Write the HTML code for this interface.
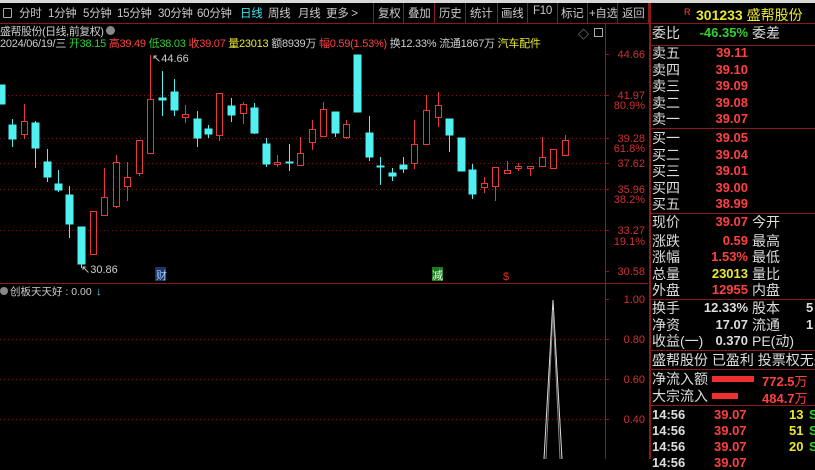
<!DOCTYPE html>
<html><head><meta charset="utf-8">
<style>
*{margin:0;padding:0;box-sizing:border-box}
body{width:815px;height:459px;background:#000;overflow:hidden;position:relative;font-family:"Liberation Sans","Noto Sans CJK SC",sans-serif;color:#ccc}
.tb{position:absolute;left:0;top:0;width:815px;height:24px;background:#000;border-top:3px solid #d8d8d8;border-bottom:1px solid #8a1a1a}
.tb span{position:absolute;top:2px;font-size:11.5px;color:#c8c8c8;white-space:nowrap;letter-spacing:-0.3px}
.sep{position:absolute;top:3px;width:1px;height:21px;background:#8a1a1a}
.t{position:absolute;white-space:nowrap}
.rp{position:absolute;left:649px;top:3px;width:166px;height:456px;border-left:2px solid #8a1a1a}
.hl{position:absolute;left:649px;width:166px;height:1px;background:#8a1a1a}
.lb{position:absolute;left:652px;font-size:14px;color:#ddd;white-space:nowrap;line-height:16px}
.v{position:absolute;width:96px;left:652px;text-align:right;font-size:13px;font-weight:bold;line-height:16px;white-space:nowrap}
.lb2{position:absolute;left:752px;font-size:14px;color:#ddd;white-space:nowrap;line-height:16px}
.r{color:#ff4040}.g{color:#30d030}.y{color:#e8e830}.w{color:#ddd}
</style></head><body>
<div class="tb">
 <div style="position:absolute;left:3px;top:5px;width:9px;height:10px;border:1px solid #aaa;border-radius:1px"></div>
 <span style="left:19px">分时</span><span style="left:48px">1分钟</span><span style="left:83px">5分钟</span><span style="left:117px">15分钟</span><span style="left:158px">30分钟</span><span style="left:197px">60分钟</span><span style="left:240px;color:#40e0f0">日线</span><span style="left:268px">周线</span><span style="left:298px">月线</span><span style="left:326px">更多 &gt;</span>
 <div class="sep" style="left:373px;top:0"></div><span style="left:378px">复权</span>
 <div class="sep" style="left:403px;top:0"></div><span style="left:408px">叠加</span>
 <div class="sep" style="left:434px;top:0"></div><span style="left:439px">历史</span>
 <div class="sep" style="left:465px;top:0"></div><span style="left:470px">统计</span>
 <div class="sep" style="left:497px;top:0"></div><span style="left:501px">画线</span>
 <div class="sep" style="left:527px;top:0"></div><span style="left:533px">F10</span>
 <div class="sep" style="left:557px;top:0"></div><span style="left:561px">标记</span>
 <div class="sep" style="left:587px;top:0"></div><span style="left:589px">+自选</span>
 <div class="sep" style="left:617px;top:0"></div><span style="left:622px">返回</span>
 <div class="sep" style="left:648px;top:0"></div>
</div>
<div class="t" style="left:0;top:23px;font-size:11px;letter-spacing:-0.5px;color:#ccc">盛帮股份(日线,前复权) <span style="display:inline-block;width:9px;height:9px;border-radius:50%;background:#888"></span></div>
<div class="t" style="left:0;top:35px;font-size:11px;letter-spacing:-0.25px;color:#ccc">2024/06/19/三 <span class="g">开38.15</span> <span class="r">高39.49</span> <span class="g">低38.03</span> <span class="r">收39.07</span> <span class="y">量23013</span> 额8939万 <span class="r">幅0.59(1.53%)</span> 换12.33% 流通1867万 <span class="y">汽车配件</span></div>
<div class="t" style="left:578px;top:26px;font-size:11px;color:#aaa">◇</div>
<div style="position:absolute;left:594px;top:28px;width:9px;height:9px;border:1px solid #aaa"></div>
<svg width="815" height="459" style="position:absolute;left:0;top:0" xmlns="http://www.w3.org/2000/svg">
<g stroke="#7a1414" stroke-dasharray="1,3" stroke-width="1">
<line x1="0" y1="95.5" x2="605" y2="95.5"/><line x1="0" y1="138.5" x2="605" y2="138.5"/><line x1="0" y1="163.5" x2="605" y2="163.5"/><line x1="0" y1="189.5" x2="605" y2="189.5"/><line x1="0" y1="230.5" x2="605" y2="230.5"/>
<line x1="0" y1="339.5" x2="605" y2="339.5"/><line x1="0" y1="379.5" x2="605" y2="379.5"/><line x1="0" y1="419.5" x2="605" y2="419.5"/>
</g>
<line x1="605.5" y1="24" x2="605.5" y2="459" stroke="#8a1a1a"/>
<line x1="0" y1="283.5" x2="648" y2="283.5" stroke="#8a1a1a"/>
<g stroke="#8a1a1a"><line x1="605" y1="54.5" x2="609" y2="54.5"/><line x1="605" y1="95.5" x2="609" y2="95.5"/><line x1="605" y1="138.5" x2="609" y2="138.5"/><line x1="605" y1="163.5" x2="609" y2="163.5"/><line x1="605" y1="189.5" x2="609" y2="189.5"/><line x1="605" y1="230.5" x2="609" y2="230.5"/><line x1="605" y1="271.5" x2="609" y2="271.5"/><line x1="605" y1="299.5" x2="609" y2="299.5"/><line x1="605" y1="339.5" x2="609" y2="339.5"/><line x1="605" y1="379.5" x2="609" y2="379.5"/><line x1="605" y1="419.5" x2="609" y2="419.5"/></g>
<g font-family="Liberation Sans, sans-serif" font-size="11" fill="#d03030" text-anchor="end">
<text x="645" y="58">44.66</text><text x="645" y="99">41.97</text><text x="645" y="109">80.9%</text><text x="645" y="142">39.28</text><text x="645" y="152">61.8%</text><text x="645" y="167">37.62</text><text x="645" y="193">35.96</text><text x="645" y="203">38.2%</text><text x="645" y="234">33.27</text><text x="645" y="245">19.1%</text><text x="645" y="275">30.58</text>
<text x="645" y="303">1.00</text><text x="645" y="343">0.80</text><text x="645" y="383">0.60</text><text x="645" y="423">0.40</text>
</g>
<g stroke-width="1">
<g stroke="#50f0f0" fill="#50f0f0">
<line x1="1.5" y1="85" x2="1.5" y2="104"/><rect x="-2" y="85" width="7" height="19"/>
<line x1="12.5" y1="119" x2="12.5" y2="147"/><rect x="9" y="125" width="7" height="14"/>
<line x1="35.5" y1="121" x2="35.5" y2="168"/><rect x="32" y="123" width="7" height="25"/>
<line x1="47.5" y1="149" x2="47.5" y2="182"/><rect x="44" y="162" width="7" height="15"/>
<line x1="58.5" y1="170" x2="58.5" y2="192"/><rect x="55" y="184" width="7" height="6"/>
<line x1="69.5" y1="186" x2="69.5" y2="238"/><rect x="66" y="195" width="7" height="29"/>
<line x1="81.5" y1="227" x2="81.5" y2="268"/><rect x="78" y="227" width="7" height="37"/>
<line x1="162.5" y1="71" x2="162.5" y2="116"/><rect x="159" y="98" width="7" height="2"/>
<line x1="174.5" y1="79" x2="174.5" y2="116"/><rect x="171" y="92" width="7" height="18"/>
<line x1="197.5" y1="111" x2="197.5" y2="147"/><rect x="194" y="119" width="7" height="19"/>
<line x1="208.5" y1="125" x2="208.5" y2="138"/><rect x="205" y="129" width="7" height="5"/>
<line x1="231.5" y1="98" x2="231.5" y2="122"/><rect x="228" y="106" width="7" height="9"/>
<line x1="254.5" y1="103" x2="254.5" y2="134"/><rect x="251" y="108" width="7" height="25"/>
<line x1="266.5" y1="138" x2="266.5" y2="167"/><rect x="263" y="144" width="7" height="20"/>
<line x1="289.5" y1="144" x2="289.5" y2="171"/><rect x="286" y="162" width="7" height="1"/>
<line x1="335.5" y1="112" x2="335.5" y2="137"/><rect x="332" y="112" width="7" height="21"/>
<rect x="354" y="55" width="7" height="57"/>
<line x1="369.5" y1="116" x2="369.5" y2="161"/><rect x="366" y="133" width="7" height="24"/>
<line x1="380.5" y1="157" x2="380.5" y2="185"/><rect x="377" y="166" width="7" height="1"/>
<line x1="392.5" y1="168" x2="392.5" y2="181"/><rect x="389" y="173" width="7" height="3"/>
<line x1="403.5" y1="157" x2="403.5" y2="173"/><rect x="400" y="165" width="7" height="4"/>
<line x1="449.5" y1="119" x2="449.5" y2="152"/><rect x="446" y="119" width="7" height="16"/>
<rect x="458" y="138" width="7" height="33"/>
<line x1="472.5" y1="164" x2="472.5" y2="199"/><rect x="469" y="170" width="7" height="24"/>
</g>
<g stroke="#e83838" fill="#000">
<line x1="24.5" y1="104" x2="24.5" y2="139"/><rect x="21.5" y="121.5" width="6" height="13"/>
<rect x="90.5" y="211.5" width="6" height="43"/>
<line x1="104.5" y1="168" x2="104.5" y2="215"/><rect x="101.5" y="197.5" width="6" height="18"/>
<line x1="116.5" y1="155" x2="116.5" y2="208"/><rect x="113.5" y="162.5" width="6" height="44"/>
<line x1="127.5" y1="162" x2="127.5" y2="201"/><rect x="124.5" y="177.5" width="6" height="9"/>
<line x1="139.5" y1="140" x2="139.5" y2="176"/><rect x="136.5" y="140.5" width="6" height="33"/>
<line x1="150.5" y1="55" x2="150.5" y2="153"/><rect x="147.5" y="99.5" width="6" height="54"/>
<line x1="185.5" y1="105" x2="185.5" y2="123"/><rect x="182.5" y="114.5" width="6" height="3"/>
<line x1="219.5" y1="93" x2="219.5" y2="141"/><rect x="216.5" y="93.5" width="6" height="42"/>
<line x1="243.5" y1="102" x2="243.5" y2="124"/><rect x="240.5" y="104.5" width="6" height="9"/>
<line x1="277.5" y1="155" x2="277.5" y2="167"/><rect x="274.5" y="162.5" width="6" height="2"/>
<line x1="300.5" y1="137" x2="300.5" y2="165"/><rect x="297.5" y="153.5" width="6" height="12"/>
<line x1="312.5" y1="120" x2="312.5" y2="150"/><rect x="309.5" y="129.5" width="6" height="13"/>
<line x1="323.5" y1="102" x2="323.5" y2="136"/><rect x="320.5" y="109.5" width="6" height="27"/>
<line x1="346.5" y1="120" x2="346.5" y2="139"/><rect x="343.5" y="124.5" width="6" height="13"/>
<line x1="414.5" y1="120" x2="414.5" y2="169"/><rect x="411.5" y="144.5" width="6" height="19"/>
<line x1="426.5" y1="95" x2="426.5" y2="144"/><rect x="423.5" y="110.5" width="6" height="34"/>
<line x1="438.5" y1="92" x2="438.5" y2="127"/><rect x="435.5" y="105.5" width="6" height="12"/>
<line x1="484.5" y1="177" x2="484.5" y2="193"/><rect x="481.5" y="183.5" width="6" height="4"/>
<line x1="495.5" y1="167" x2="495.5" y2="201"/><rect x="492.5" y="167.5" width="6" height="19"/>
<line x1="507.5" y1="161" x2="507.5" y2="173"/><rect x="504.5" y="170.5" width="6" height="3"/>
<line x1="518.5" y1="163" x2="518.5" y2="171"/><rect x="515.5" y="166.5" width="6" height="2"/>
<line x1="530.5" y1="166" x2="530.5" y2="176"/><rect x="527.5" y="166.5" width="6" height="2"/>
<line x1="542.5" y1="137" x2="542.5" y2="166"/><rect x="539.5" y="157.5" width="6" height="9"/>
<rect x="550.5" y="149.5" width="6" height="19"/>
<line x1="565.5" y1="135" x2="565.5" y2="155"/><rect x="562.5" y="140.5" width="6" height="15"/>
</g>
</g>
<g font-family="Liberation Sans, sans-serif" font-size="11" fill="#ccc">
<text x="152" y="62">↖44.66</text>
<text x="81" y="273">↖30.86</text>
</g>
<rect x="155" y="267" width="11" height="14" fill="#223366"/>
<text x="156" y="279" font-size="11" fill="#9cf" font-family="Noto Sans CJK SC, sans-serif">财</text>
<rect x="432" y="267" width="11" height="14" fill="#1e7a1e"/>
<text x="432" y="279" font-size="11" fill="#dfd" font-family="Noto Sans CJK SC, sans-serif">减</text>
<text x="503" y="280" font-size="11" fill="#e03030" font-family="Liberation Sans, sans-serif">$</text>
<circle cx="4" cy="291" r="4" fill="#888"/>
<text x="10" y="295" font-size="10.5" fill="#ccc" font-family="Liberation Sans, Noto Sans CJK SC, sans-serif">创板天天好 : 0.00</text>
<text x="96" y="295" font-size="11" fill="#40e0f0" font-family="Liberation Sans, sans-serif">↓</text>
<polyline points="544,459 553,300 562,459" fill="none" stroke="#ddd" stroke-width="1"/>
<polyline points="546,459 553,310 560,459" fill="none" stroke="#888" stroke-width="1"/>
</svg>

<div class="rp"></div>
<div class="t" style="left:684px;top:7px;font-size:9px;color:#ff4040">R</div>
<div class="t" style="left:696px;top:5px;font-size:14px;font-weight:bold;color:#e8e830">301233 <span style="font-weight:normal">盛帮股份</span></div>
<div class="hl" style="top:23px"></div>
<div class="lb" style="top:25px">委比</div><div class="v g" style="top:25px">-46.35%</div><div class="lb2" style="top:25px">委差</div>
<div class="hl" style="top:45px"></div>
<div class="lb" style="top:45px">卖五</div><div class="v r" style="top:45px">39.11</div>
<div class="lb" style="top:62px">卖四</div><div class="v r" style="top:62px">39.10</div>
<div class="lb" style="top:78px">卖三</div><div class="v r" style="top:78px">39.09</div>
<div class="lb" style="top:95px">卖二</div><div class="v r" style="top:95px">39.08</div>
<div class="lb" style="top:111px">卖一</div><div class="v r" style="top:111px">39.07</div>
<div class="hl" style="top:128px"></div>
<div class="lb" style="top:130px">买一</div><div class="v r" style="top:130px">39.05</div>
<div class="lb" style="top:147px">买二</div><div class="v r" style="top:147px">39.04</div>
<div class="lb" style="top:163px">买三</div><div class="v r" style="top:163px">39.01</div>
<div class="lb" style="top:180px">买四</div><div class="v r" style="top:180px">39.00</div>
<div class="lb" style="top:196px">买五</div><div class="v r" style="top:196px">38.99</div>
<div class="hl" style="top:213px"></div>
<div class="lb" style="top:214px">现价</div><div class="v r" style="top:214px">39.07</div><div class="lb2" style="top:214px">今开</div>
<div class="lb" style="top:233px">涨跌</div><div class="v r" style="top:233px">0.59</div><div class="lb2" style="top:233px">最高</div>
<div class="lb" style="top:249px">涨幅</div><div class="v r" style="top:249px">1.53%</div><div class="lb2" style="top:249px">最低</div>
<div class="lb" style="top:266px">总量</div><div class="v y" style="top:266px">23013</div><div class="lb2" style="top:266px">量比</div>
<div class="lb" style="top:282px">外盘</div><div class="v r" style="top:282px">12955</div><div class="lb2" style="top:282px">内盘</div>
<div class="hl" style="top:299px"></div>
<div class="lb" style="top:300px">换手</div><div class="v w" style="top:300px">12.33%</div><div class="lb2" style="top:300px">股本</div><div class="t w" style="left:806px;top:300px;font-size:13px;font-weight:bold">5</div>
<div class="lb" style="top:317px">净资</div><div class="v w" style="top:317px">17.07</div><div class="lb2" style="top:317px">流通</div><div class="t w" style="left:806px;top:317px;font-size:13px;font-weight:bold">1</div>
<div class="lb" style="top:333px">收益(一)</div><div class="v w" style="top:333px">0.370</div><div class="lb2" style="top:333px">PE(动)</div>
<div class="hl" style="top:350px"></div>
<div class="lb" style="top:352px">盛帮股份 已盈利 投票权无差</div>
<div class="hl" style="top:369px"></div>
<div class="lb" style="top:371px">净流入额</div><div style="position:absolute;left:712px;top:376px;width:42px;height:6px;background:#f03030"></div><div class="t r" style="left:762px;top:371px;font-size:13px;font-weight:bold">772.5<span style="font-weight:normal">万</span></div>
<div class="lb" style="top:388px">大宗流入</div><div style="position:absolute;left:712px;top:393px;width:26px;height:6px;background:#f03030"></div><div class="t r" style="left:762px;top:388px;font-size:13px;font-weight:bold">484.7<span style="font-weight:normal">万</span></div>
<div class="hl" style="top:405px"></div>
<div class="t w" style="left:652px;top:407px;font-size:13px;font-weight:bold">14:56</div><div class="t r" style="left:714px;top:407px;font-size:13px;font-weight:bold">39.07</div><div class="t y" style="left:789px;top:407px;font-size:13px;font-weight:bold">13</div><div class="t g" style="left:809px;top:407px;font-size:13px;font-weight:bold">S</div>
<div class="t w" style="left:652px;top:423px;font-size:13px;font-weight:bold">14:56</div><div class="t r" style="left:714px;top:423px;font-size:13px;font-weight:bold">39.07</div><div class="t y" style="left:789px;top:423px;font-size:13px;font-weight:bold">51</div><div class="t g" style="left:809px;top:423px;font-size:13px;font-weight:bold">S</div>
<div class="t w" style="left:652px;top:439px;font-size:13px;font-weight:bold">14:56</div><div class="t r" style="left:714px;top:439px;font-size:13px;font-weight:bold">39.07</div><div class="t y" style="left:789px;top:439px;font-size:13px;font-weight:bold">20</div><div class="t g" style="left:809px;top:439px;font-size:13px;font-weight:bold">S</div>
<div class="t w" style="left:652px;top:455px;font-size:13px;font-weight:bold">14:56</div><div class="t r" style="left:714px;top:455px;font-size:13px;font-weight:bold">39.07</div>
</body></html>
